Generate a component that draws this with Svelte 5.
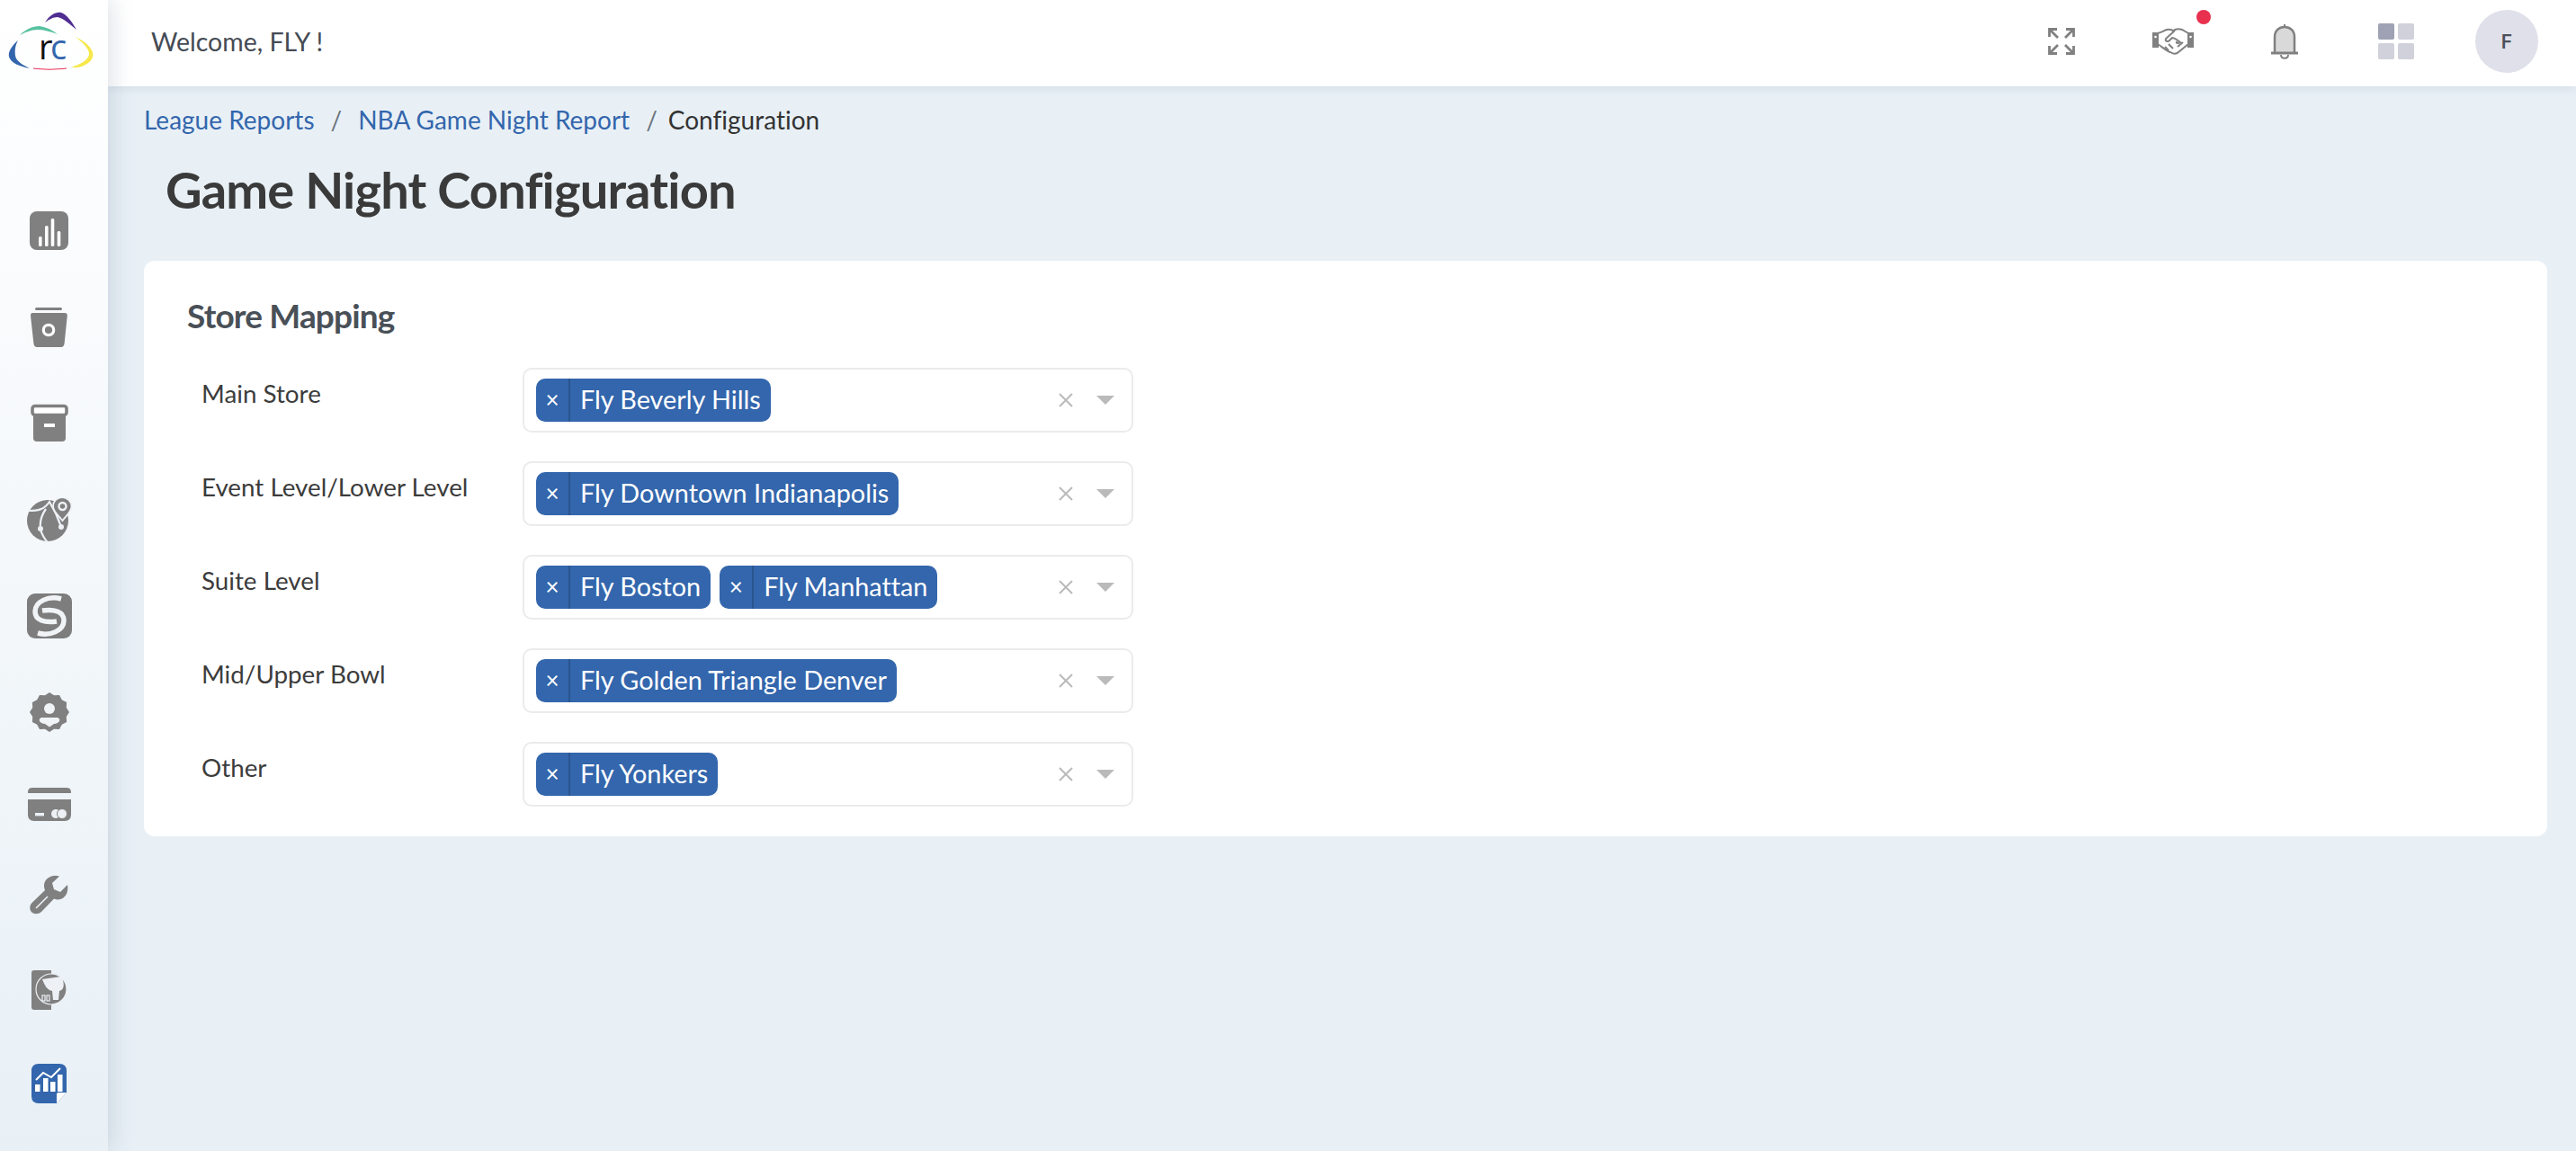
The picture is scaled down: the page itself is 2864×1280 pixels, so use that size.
<script>
  const rows = [
    { label: 'Main Store', tags: ['Fly Beverly Hills'] },
    { label: 'Event Level/Lower Level', tags: ['Fly Downtown Indianapolis'] },
    { label: 'Suite Level', tags: ['Fly Boston', 'Fly Manhattan'] },
    { label: 'Mid/Upper Bowl', tags: ['Fly Golden Triangle Denver'] },
    { label: 'Other', tags: ['Fly Yonkers'] }
  ];

  // scalloped badge outline for the user-gear icon
  const badge = (() => {
    const pts = [];
    for (let i = 0; i < 24; i++) {
      const a = (i / 24) * Math.PI * 2 - Math.PI / 2;
      const r = i % 2 === 0 ? 22 : 19.5;
      pts.push(`${(22 + r * Math.cos(a)).toFixed(1)},${(22 + r * Math.sin(a)).toFixed(1)}`);
    }
    return pts.join(' ');
  })();
</script>

<div class="shell">
  <aside class="sidebar">
    <div class="logo">
      <svg width="120" height="96" viewBox="0 0 120 96">
        <path d="M50 25 C56 16 62 13 68 14 C74 16 80 24 85 33 C78 27 70 20 64 19 C59 19 54 22 50 25Z" fill="#4f2d91" />
        <path d="M22 39 C28 33 36 29 44 29 C51 30 58 33 64 38 C56 35 48 33 42 33 C35 33 28 36 22 39Z" fill="#58c2a0" />
        <path d="M20 45 C12 52 9 58 10 63 C12 70 22 74 33 76 C25 72 18 68 17 62 C16 56 17 50 20 45Z" fill="#3366ac" />
        <path d="M84 41 C92 45 100 50 103 58 C105 65 99 70 95 72 C90 75 84 75.500 79 75 C88 72 97 68 99 61 C100 54 91 47 84 41Z" fill="#f6e84a" />
        <path d="M37 75.500 C48 77 62 77 74 75.500 L74 76.500 C62 78 48 78 37 76.500Z" fill="#e8305a" />
        <text x="43" y="66" class="logo-r">r</text>
        <text x="56" y="66" class="logo-c">c</text>
      </svg>
    </div>
    <nav class="nav">
      <div class="nav-item">
        <svg width="44" height="44" viewBox="0 0 44 44">
          <rect width="43" height="43" rx="8" fill="#808080" />
          <g fill="#fff">
            <rect x="10" y="28" width="3.600" height="11" rx="1.500" />
            <rect x="17" y="16" width="3.600" height="23" rx="1.500" />
            <rect x="23.700" y="8" width="3.600" height="31" rx="1.500" />
            <rect x="30.700" y="22" width="3.600" height="17" rx="1.500" />
          </g>
        </svg>
      </div>
      <div class="nav-item">
        <svg width="44" height="44" viewBox="0 0 44 44">
          <rect x="6" y="0" width="30" height="3" rx="1.500" fill="#808080" />
          <path d="M3 6 H39 Q42 6 41.800 9 L38.600 40 Q38 44 35 44 H8 Q5 44 4.400 40 L1 9 Q1 6 3 6Z" fill="#808080" />
          <circle cx="21" cy="25" r="5.700" fill="none" stroke="#fff" stroke-width="3.200" />
        </svg>
      </div>
      <div class="nav-item">
        <svg width="44" height="44" viewBox="0 0 44 44">
          <path d="M4 14 H40 V38 Q40 42 36 42 H8 Q4 42 4 38Z" fill="#808080" />
          <rect x="3" y="2.500" width="38" height="10" rx="3" fill="#fff" stroke="#808080" stroke-width="3.600" />
          <rect x="16" y="22" width="12" height="4" fill="#fff" />
        </svg>
      </div>
      <div class="nav-item">
        <svg width="50" height="50" viewBox="0 0 50 50">
          <circle cx="23" cy="26" r="23" fill="#808080" />
          <g fill="none" stroke="#edf1f5" stroke-width="2.200">
            <path d="M2 15 C12 15 19 14 25 5 C31 15 35 24 38 33" />
            <path d="M21 13 C16 20 14 28 15 36 C17 42 20 47 23 50" />
          </g>
          <circle cx="15" cy="35" r="3" fill="#edf1f5" />
          <circle cx="38" cy="33" r="3" fill="#edf1f5" />
          <path d="M39 0 C33 0 29 5 29 10 C29 16 35 20 39.500 26 C44 20 49.500 16 49.500 10 C49.500 5 45 0 39 0Z" fill="#808080" stroke="#eff3f7" stroke-width="1.800" />
          <circle cx="39.500" cy="10" r="4" fill="none" stroke="#eff3f7" stroke-width="2.400" />
        </svg>
      </div>
      <div class="nav-item">
        <svg width="50" height="50" viewBox="0 0 50 50">
          <rect width="50" height="50" rx="9" fill="#7d7d7d" />
          <g fill="none" stroke="#f1f4f7" stroke-width="5.500">
            <path d="M38 6 C24 2 9 9 9 20 C9 30 20 33 33 31" />
            <path d="M12 44 C26 48 41 41 41 30 C41 20 30 17 17 19" />
          </g>
        </svg>
      </div>
      <div class="nav-item">
        <svg width="44" height="44" viewBox="0 0 44 44">
          <polygon points={badge} fill="#808080" />
          <circle cx="22" cy="18" r="6" fill="#f0f4f7" />
          <path d="M13 28 H31 Q34 29 33 32 Q31 35 27 35 L22 38.500 L17 35 Q13 35 11 32 Q10 29 13 28Z" fill="#f0f4f7" />
        </svg>
      </div>
      <div class="nav-item">
        <svg width="48" height="38" viewBox="0 0 48 38">
          <path d="M0 5 Q0 0 5 0 H43 Q48 0 48 5 V6 H0Z" fill="#808080" />
          <path d="M0 13 H48 V30 Q48 37 41 37 H7 Q0 37 0 30Z" fill="#808080" />
          <rect x="8" y="28" width="10" height="3.400" fill="#edf1f5" />
          <circle cx="31" cy="29" r="5" fill="#edf1f5" />
          <circle cx="38" cy="29" r="5.500" fill="#edf1f5" stroke="#808080" stroke-width="1" />
        </svg>
      </div>
      <div class="nav-item">
        <svg width="44" height="44" viewBox="0 0 44 44">
          <path d="M42 11 L34 19 L27 16 L25 9 L33 1.500 C26 -1 16 3 16 12 C16 14 16.500 15.500 17 17 L2.500 31 C-1 35 0 40 3 42 C6 44 10 43.500 13 41 L27 26.500 C36 30 44 23 42 11Z" fill="#808080" />
          <path d="M7 37 L20 24" stroke="#edf1f5" stroke-width="1.600" />
        </svg>
      </div>
      <div class="nav-item">
        <svg width="40" height="44" viewBox="0 0 40 44">
          <path d="M0 3 Q0 0 3 0 H22 V44 H3 Q0 44 0 41Z" fill="#808080" />
          <circle cx="22" cy="21" r="17" fill="#808080" stroke="#edf1f5" stroke-width="1.200" />
          <path d="M12 10 L33 7 C37 13 37 22 31 23 L30 33 L24 33 L23 23 C18 22 15 18 12 10Z" fill="#edf1f5" />
          <g stroke="#edf1f5" stroke-width="1.200" fill="none">
            <rect x="12" y="28" width="3" height="6" />
            <rect x="17" y="28" width="3" height="6" />
          </g>
        </svg>
      </div>
      <div class="nav-item">
        <svg width="40" height="46" viewBox="0 0 40 46">
          <path d="M8 1 H31 Q39 1 39 9 V33 L28 45 H8 Q0 45 0 37 V9 Q0 1 8 1Z" fill="#3366ac" />
          <path d="M39 33 H30 Q28 33 28 35 V45Z" fill="#fff" />
          <g fill="#fff">
            <rect x="4" y="24" width="5.500" height="8" />
            <rect x="13" y="17" width="5.500" height="15" />
            <rect x="21" y="21" width="5.500" height="11" />
            <rect x="29" y="13" width="5.500" height="19" />
          </g>
          <path d="M5 19 L13 11 L22 16 L32 6" fill="none" stroke="#fff" stroke-width="2" />
        </svg>
      </div>
    </nav>
  </aside>

  <div class="main">
    <header class="topbar">
      <div class="welcome">Welcome, FLY !</div>
      <div class="actions">
        <button class="action expand" aria-label="Fullscreen">
          <svg width="30" height="30" viewBox="0 0 30 30" fill="none" stroke="#808080" stroke-width="2.800">
            <path d="M1.500 10 V1.500 H10 M1.500 1.500 L11 11" />
            <path d="M20 1.500 H28.500 V10 M28.500 1.500 L19 11" />
            <path d="M1.500 20 V28.500 H10 M1.500 28.500 L11 19" />
            <path d="M20 28.500 H28.500 V20 M28.500 28.500 L19 19" />
          </svg>
        </button>
        <button class="action shake" aria-label="Partners">
          <svg width="46" height="30" viewBox="0 0 46 30">
            <path d="M6 6 C10 5 13 3 16 2 C19 1 21 2 23 3 C26 1 30 1 33 2 L40 6 V18 L29 27 C26 30 23 29 20 27 C16 26 12 22 6 18Z" fill="none" stroke="#808080" stroke-width="2" />
            <path d="M25 3 L15 12 C14 15 17 16 19 14 L22 11 C25 11 28 14 31 16 C29 17 26 18 27 15" fill="none" stroke="#808080" stroke-width="2" />
            <path d="M14 21 L18 25 M18 18 L23 23 M28 21 L34 16" fill="none" stroke="#808080" stroke-width="2" />
            <rect x="0" y="5" width="7" height="17" fill="#808080" />
            <rect x="39" y="5" width="7" height="17" fill="#808080" />
            <circle cx="3.500" cy="10" r="1.300" fill="#fff" />
            <circle cx="42.500" cy="10" r="1.300" fill="#fff" />
          </svg>
          <span class="dot"></span>
        </button>
        <button class="action bell" aria-label="Notifications">
          <svg width="30" height="40" viewBox="0 0 30 40">
            <path d="M15 1 V5" stroke="#808080" stroke-width="2" />
            <path d="M4 32 V15 C4 8 9 4 15 4 C21 4 26 8 26 15 V32" fill="#d9d9d9" stroke="#808080" stroke-width="2.500" />
            <path d="M0 33 H30" stroke="#808080" stroke-width="3" />
            <path d="M11 35 C11 40 19 40 19 35" fill="none" stroke="#808080" stroke-width="2" />
          </svg>
        </button>
        <div class="grid-icon">
          <span class="on"></span><span></span><span></span><span></span>
        </div>
        <div class="avatar">F</div>
      </div>
    </header>

    <div class="content">
      <div class="breadcrumb">
        <a href="#reports">League Reports</a>
        <span class="sep">/</span>
        <a href="#nba">NBA Game Night Report</a>
        <span class="sep">/</span>
        <span class="current">Configuration</span>
      </div>
      <h1>Game Night Configuration</h1>

      <section class="card">
        <h2>Store Mapping</h2>
        {#each rows as row}
          <div class="row">
            <div class="row-label">{row.label}</div>
            <div class="select">
              <div class="tags">
                {#each row.tags as tag}
                  <div class="tag">
                    <span class="tag-x">×</span>
                    <span class="tag-text">{tag}</span>
                  </div>
                {/each}
              </div>
              <svg class="clear" width="16" height="16" viewBox="0 0 16 16">
                <path d="M1 1 L15 15 M15 1 L1 15" stroke="#bababa" stroke-width="2" />
              </svg>
              <span class="arrow"></span>
            </div>
          </div>
        {/each}
      </section>
    </div>
  </div>
</div>

<style>
  :global(body) {
    margin: 0;
    background: #e8f0f6;
  }

  .shell {
    display: flex;
    height: 100vh;
    font-family: Lato, "Open Sans", sans-serif;
    font-variant-ligatures: none;
    overflow: hidden;
  }

  .sidebar {
    width: 120px;
    flex-shrink: 0;
    background: linear-gradient(to bottom, #ffffff, #e8f0f6);
    box-shadow: 4px 0 24px rgba(70, 90, 120, 0.18);
    position: relative;
    z-index: 2;
  }

  .logo {
    height: 96px;
  }

  .logo-r {
    font: 400 38px "Open Sans", sans-serif;
    fill: #111;
  }

  .logo-c {
    font: 400 38px "Open Sans", sans-serif;
    fill: #3366ac;
  }

  .nav {
    padding-top: 107.5px;
  }

  .nav-item {
    height: 107px;
    padding-right: 10px;
    display: flex;
    align-items: center;
    justify-content: center;
  }

  .nav-item:nth-child(7) {
    height: 99px;
  }

  .nav-item:nth-child(8) {
    height: 101px;
  }

  .nav-item:nth-child(9) {
    height: 111px;
  }

  .nav-item:nth-child(10) {
    height: 97px;
  }

  .main {
    flex: 1;
    min-width: 0;
    display: flex;
    flex-direction: column;
  }

  .topbar {
    height: 96px;
    flex-shrink: 0;
    background: #fff;
    box-shadow: 0 2px 10px rgba(70, 90, 120, 0.12);
    display: flex;
    align-items: center;
    justify-content: space-between;
    padding: 0 42px 4px 48px;
    box-sizing: border-box;
    position: relative;
    z-index: 1;
  }

  .welcome {
    font-size: 28.500px;
    color: #454b54;
  }

  .actions {
    display: flex;
    align-items: center;
  }

  .action {
    background: none;
    border: 0;
    padding: 0;
    display: flex;
    position: relative;
  }

  .expand {
    margin-right: 86px;
  }

  .shake {
    margin-right: 86px;
  }

  .bell {
    margin-right: 89px;
  }

  .dot {
    position: absolute;
    top: -20px;
    left: 49px;
    width: 16px;
    height: 16px;
    border-radius: 50%;
    background: #e8304f;
  }

  .grid-icon {
    display: grid;
    grid-template-columns: 18px 18px;
    grid-template-rows: 18px 18px;
    gap: 4px;
    margin-right: 68px;
  }

  .grid-icon span {
    background: #d0d1da;
    border-radius: 2px;
  }

  .grid-icon .on {
    background: #9fa2b4;
  }

  .avatar {
    width: 70px;
    height: 70px;
    border-radius: 50%;
    background: #e0e0ea;
    color: #4a4f5a;
    font: 600 21px Inter, sans-serif;
    display: flex;
    align-items: center;
    justify-content: center;
  }

  .content {
    flex: 1;
    padding: 0 32px 0 40px;
  }

  .breadcrumb {
    display: flex;
    gap: 18px;
    font-size: 28px;
    line-height: 34px;
    padding-top: 20px;
  }

  .breadcrumb a {
    color: #3366ac;
    text-decoration: none;
  }

  .sep {
    color: #6c757d;
  }

  .current {
    color: #333;
    margin-left: -6px;
  }

  h1 {
    margin: 23px 0 41px 24px;
    font-size: 56px;
    line-height: 76px;
    font-weight: 700;
    letter-spacing: -0.85px;
    color: #3a3a3a;
  }

  .card {
    background: #fff;
    border-radius: 12px;
    padding: 36px 48px 32px 48px;
    height: 640px;
    box-sizing: border-box;
  }

  h2 {
    margin: 0 0 33px 0;
    font-size: 37px;
    line-height: 50px;
    font-weight: 700;
    letter-spacing: -0.85px;
    color: #495057;
  }

  .row {
    display: flex;
    height: 72px;
    margin-bottom: 32px;
  }

  .row-label {
    width: 373px;
    padding: 12px 0 0 16px;
    box-sizing: border-box;
    font-size: 27.800px;
    line-height: 34px;
    color: #3c3c3c;
  }

  .select {
    width: 679px;
    height: 72px;
    box-sizing: border-box;
    border: 2px solid #ebebeb;
    border-radius: 10px;
    display: flex;
    align-items: center;
    padding: 0 19px 0 13px;
  }

  .tags {
    flex: 1;
    display: flex;
    gap: 10px;
  }

  .tag {
    height: 48px;
    background: #3366ac;
    border-radius: 10px;
    color: #fff;
    display: flex;
    align-items: stretch;
    font-size: 28.800px;
    line-height: 46px;
  }

  .tag-x {
    width: 36px;
    border-right: 2px solid #2a5590;
    text-align: center;
    font-size: 26px;
  }

  .tag-text {
    padding: 0 11px;
  }

  .clear {
    margin-right: 26px;
  }

  .arrow {
    width: 0;
    height: 0;
    border-left: 10px solid transparent;
    border-right: 10px solid transparent;
    border-top: 10px solid #bababa;
  }
</style>
